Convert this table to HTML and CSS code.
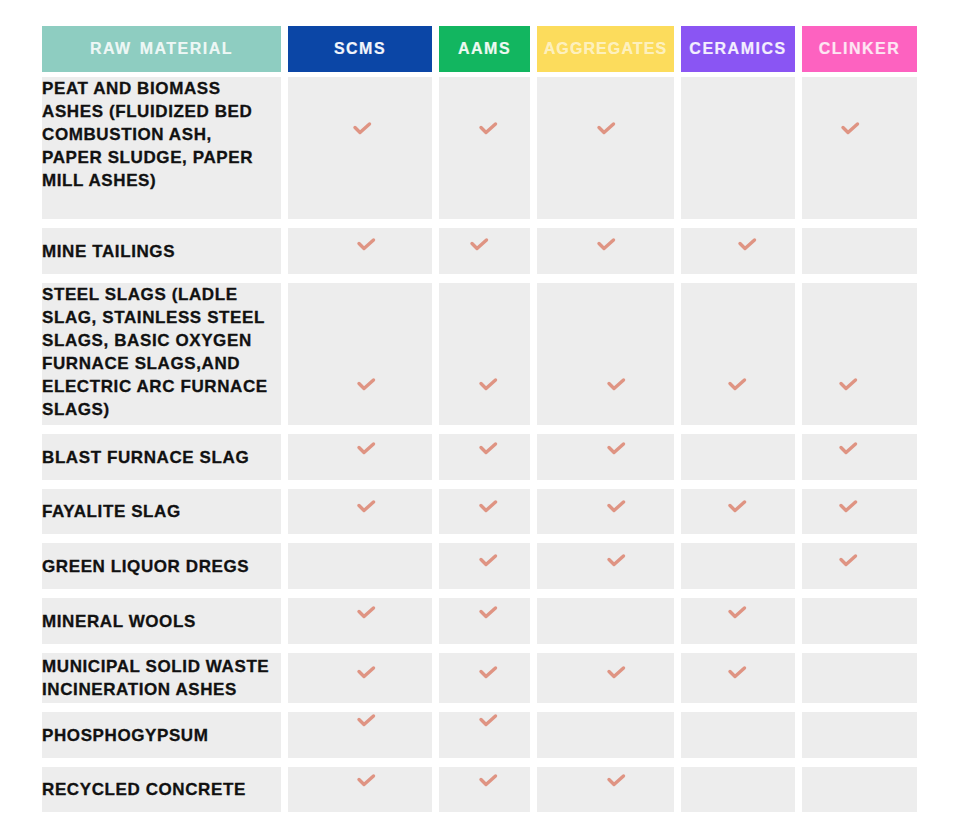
FILE: index.html
```html
<!DOCTYPE html>
<html lang="en">
<head>
<meta charset="utf-8">
<title>Raw materials matrix</title>
<link rel="stylesheet" href="styles.css">
</head>
<body>
<div class="page">
  <div class="table">
    <div class="row head">
      <div class="h h-raw">RAW MATERIAL</div>
      <div class="h h-scms">SCMS</div>
      <div class="h h-aams">AAMS</div>
      <div class="h h-agg">AGGREGATES</div>
      <div class="h h-cer">CERAMICS</div>
      <div class="h h-cli">CLINKER</div>
    </div>
    <div class="body">
      <div class="row r1 tall">
        <div class="label">PEAT AND BIOMASS<br>ASHES (FLUIDIZED BED<br>COMBUSTION ASH,<br>PAPER SLUDGE, PAPER<br>MILL ASHES)</div>
        <div class="c scms"><svg class="mark" viewBox="0 0 18 13"><path d="M2 5.5 L7 10.5 L16.5 2"/></svg></div>
        <div class="c aams"><svg class="mark" viewBox="0 0 18 13"><path d="M2 5.5 L7 10.5 L16.5 2"/></svg></div>
        <div class="c agg"><svg class="mark" viewBox="0 0 18 13"><path d="M2 5.5 L7 10.5 L16.5 2"/></svg></div>
        <div class="c cer"></div>
        <div class="c cli"><svg class="mark" viewBox="0 0 18 13"><path d="M2 5.5 L7 10.5 L16.5 2"/></svg></div>
      </div>
      <div class="row r2">
        <div class="label">MINE TAILINGS</div>
        <div class="c scms"><svg class="mark" viewBox="0 0 18 13"><path d="M2 5.5 L7 10.5 L16.5 2"/></svg></div>
        <div class="c aams"><svg class="mark" viewBox="0 0 18 13"><path d="M2 5.5 L7 10.5 L16.5 2"/></svg></div>
        <div class="c agg"><svg class="mark" viewBox="0 0 18 13"><path d="M2 5.5 L7 10.5 L16.5 2"/></svg></div>
        <div class="c cer"><svg class="mark" viewBox="0 0 18 13"><path d="M2 5.5 L7 10.5 L16.5 2"/></svg></div>
        <div class="c cli"></div>
      </div>
      <div class="row r3 tall">
        <div class="label">STEEL SLAGS (LADLE<br>SLAG, STAINLESS STEEL<br>SLAGS, BASIC OXYGEN<br>FURNACE SLAGS,AND<br>ELECTRIC ARC FURNACE<br>SLAGS)</div>
        <div class="c scms"><svg class="mark" viewBox="0 0 18 13"><path d="M2 5.5 L7 10.5 L16.5 2"/></svg></div>
        <div class="c aams"><svg class="mark" viewBox="0 0 18 13"><path d="M2 5.5 L7 10.5 L16.5 2"/></svg></div>
        <div class="c agg"><svg class="mark" viewBox="0 0 18 13"><path d="M2 5.5 L7 10.5 L16.5 2"/></svg></div>
        <div class="c cer"><svg class="mark" viewBox="0 0 18 13"><path d="M2 5.5 L7 10.5 L16.5 2"/></svg></div>
        <div class="c cli"><svg class="mark" viewBox="0 0 18 13"><path d="M2 5.5 L7 10.5 L16.5 2"/></svg></div>
      </div>
      <div class="row r4">
        <div class="label">BLAST FURNACE SLAG</div>
        <div class="c scms"><svg class="mark" viewBox="0 0 18 13"><path d="M2 5.5 L7 10.5 L16.5 2"/></svg></div>
        <div class="c aams"><svg class="mark" viewBox="0 0 18 13"><path d="M2 5.5 L7 10.5 L16.5 2"/></svg></div>
        <div class="c agg"><svg class="mark" viewBox="0 0 18 13"><path d="M2 5.5 L7 10.5 L16.5 2"/></svg></div>
        <div class="c cer"></div>
        <div class="c cli"><svg class="mark" viewBox="0 0 18 13"><path d="M2 5.5 L7 10.5 L16.5 2"/></svg></div>
      </div>
      <div class="row r5">
        <div class="label">FAYALITE SLAG</div>
        <div class="c scms"><svg class="mark" viewBox="0 0 18 13"><path d="M2 5.5 L7 10.5 L16.5 2"/></svg></div>
        <div class="c aams"><svg class="mark" viewBox="0 0 18 13"><path d="M2 5.5 L7 10.5 L16.5 2"/></svg></div>
        <div class="c agg"><svg class="mark" viewBox="0 0 18 13"><path d="M2 5.5 L7 10.5 L16.5 2"/></svg></div>
        <div class="c cer"><svg class="mark" viewBox="0 0 18 13"><path d="M2 5.5 L7 10.5 L16.5 2"/></svg></div>
        <div class="c cli"><svg class="mark" viewBox="0 0 18 13"><path d="M2 5.5 L7 10.5 L16.5 2"/></svg></div>
      </div>
      <div class="row r6">
        <div class="label">GREEN LIQUOR DREGS</div>
        <div class="c scms"></div>
        <div class="c aams"><svg class="mark" viewBox="0 0 18 13"><path d="M2 5.5 L7 10.5 L16.5 2"/></svg></div>
        <div class="c agg"><svg class="mark" viewBox="0 0 18 13"><path d="M2 5.5 L7 10.5 L16.5 2"/></svg></div>
        <div class="c cer"></div>
        <div class="c cli"><svg class="mark" viewBox="0 0 18 13"><path d="M2 5.5 L7 10.5 L16.5 2"/></svg></div>
      </div>
      <div class="row r7">
        <div class="label">MINERAL WOOLS</div>
        <div class="c scms"><svg class="mark" viewBox="0 0 18 13"><path d="M2 5.5 L7 10.5 L16.5 2"/></svg></div>
        <div class="c aams"><svg class="mark" viewBox="0 0 18 13"><path d="M2 5.5 L7 10.5 L16.5 2"/></svg></div>
        <div class="c agg"></div>
        <div class="c cer"><svg class="mark" viewBox="0 0 18 13"><path d="M2 5.5 L7 10.5 L16.5 2"/></svg></div>
        <div class="c cli"></div>
      </div>
      <div class="row r8">
        <div class="label">MUNICIPAL SOLID WASTE<br>INCINERATION ASHES</div>
        <div class="c scms"><svg class="mark" viewBox="0 0 18 13"><path d="M2 5.5 L7 10.5 L16.5 2"/></svg></div>
        <div class="c aams"><svg class="mark" viewBox="0 0 18 13"><path d="M2 5.5 L7 10.5 L16.5 2"/></svg></div>
        <div class="c agg"><svg class="mark" viewBox="0 0 18 13"><path d="M2 5.5 L7 10.5 L16.5 2"/></svg></div>
        <div class="c cer"><svg class="mark" viewBox="0 0 18 13"><path d="M2 5.5 L7 10.5 L16.5 2"/></svg></div>
        <div class="c cli"></div>
      </div>
      <div class="row r9">
        <div class="label">PHOSPHOGYPSUM</div>
        <div class="c scms"><svg class="mark" viewBox="0 0 18 13"><path d="M2 5.5 L7 10.5 L16.5 2"/></svg></div>
        <div class="c aams"><svg class="mark" viewBox="0 0 18 13"><path d="M2 5.5 L7 10.5 L16.5 2"/></svg></div>
        <div class="c agg"></div>
        <div class="c cer"></div>
        <div class="c cli"></div>
      </div>
      <div class="row r10">
        <div class="label">RECYCLED CONCRETE</div>
        <div class="c scms"><svg class="mark" viewBox="0 0 18 13"><path d="M2 5.5 L7 10.5 L16.5 2"/></svg></div>
        <div class="c aams"><svg class="mark" viewBox="0 0 18 13"><path d="M2 5.5 L7 10.5 L16.5 2"/></svg></div>
        <div class="c agg"><svg class="mark" viewBox="0 0 18 13"><path d="M2 5.5 L7 10.5 L16.5 2"/></svg></div>
        <div class="c cer"></div>
        <div class="c cli"></div>
      </div>
    </div>
  </div>
</div>
</body>
</html>
```

FILE: styles.css
```css
* { box-sizing: border-box; }
html, body {
  margin: 0;
  padding: 0;
  background: #ffffff;
}
.page {
  padding: 26px 0 0 42px;
  font-family: "Liberation Sans", Arial, sans-serif;
}
.table {
  display: flex;
  flex-direction: column;
  width: 875px;
}
.row {
  display: grid;
  grid-template-columns: 239px 144px 91px 137px 114px 115px;
  column-gap: 7px;
}
.head {
  height: 46px;
  margin-bottom: 5px;
}
.h {
  display: flex;
  align-items: center;
  justify-content: center;
  font-size: 16px;
  font-weight: 700;
  letter-spacing: 1.5px;
  color: rgba(255, 255, 255, 0.85);
  white-space: nowrap;
  word-spacing: 2px;
  -webkit-text-stroke: 0.2px currentColor;
}
.h-raw { background: #8ecdc1; }
.h-scms { background: #0b46a6; color: #f2f5fb; }
.h-aams { background: #12b660; color: #eef9f2; }
.h-agg { background: #fcdc5c; color: rgba(255, 255, 255, 0.62); letter-spacing: 1.1px; }
.h-cer { background: #8a55f3; color: #f3eefe; }
.h-cli { background: #fd62c0; color: #fde6f3; }

.body {
  display: flex;
  flex-direction: column;
  row-gap: 9px;
}
.label, .c {
  background: #ededed;
}
.label {
  display: flex;
  align-items: center;
  padding-left: 0;
  font-size: 17px;
  font-weight: 700;
  letter-spacing: 0.6px;
  line-height: 23px;
  color: #111111;
  -webkit-text-stroke: 0.3px #111111;
}
.tall .label { align-items: flex-start; }

.c {
  display: flex;
  align-items: flex-start;
  justify-content: flex-start;
}
.mark {
  width: 18px;
  height: 13px;
  flex: none;
  overflow: visible;
}
.mark path {
  fill: none;
  stroke: #df9483;
  stroke-width: 3.4;
  stroke-linecap: round;
  stroke-linejoin: round;
}

/* column horizontal placement of the check marks */
.scms { padding-left: 69px; }
.aams { padding-left: 40px; }
.agg { padding-left: 70px; }
.cer { padding-left: 47px; }
.cli { padding-left: 37px; }
.r1 .scms { padding-left: 65px; }
.r1 .agg { padding-left: 60px; }
.r1 .cli { padding-left: 39px; }
.r2 .aams { padding-left: 31px; }
.r2 .agg { padding-left: 60px; }
.r2 .cer { padding-left: 57px; }

/* row heights and vertical placement of the check marks */
.r1 { height: 142px; }
.r1 .c { padding-top: 45px; }
.r2 { height: 46px; }
.r2 .c { padding-top: 10px; }
.r3 { height: 142px; }
.r3 .c { padding-top: 95px; }
.r4 { height: 46px; }
.r4 .c { padding-top: 8px; }
.r5 { height: 45px; }
.r5 .c { padding-top: 11px; }
.r6 { height: 46px; }
.r6 .c { padding-top: 11px; }
.r7 { height: 46px; }
.r7 .c { padding-top: 8px; }
.r8 { height: 50px; }
.r8 .c { padding-top: 13px; }
.r9 { height: 46px; }
.r9 .c { padding-top: 2px; }
.r10 { height: 45px; }
.r10 .c { padding-top: 7px; }
```
